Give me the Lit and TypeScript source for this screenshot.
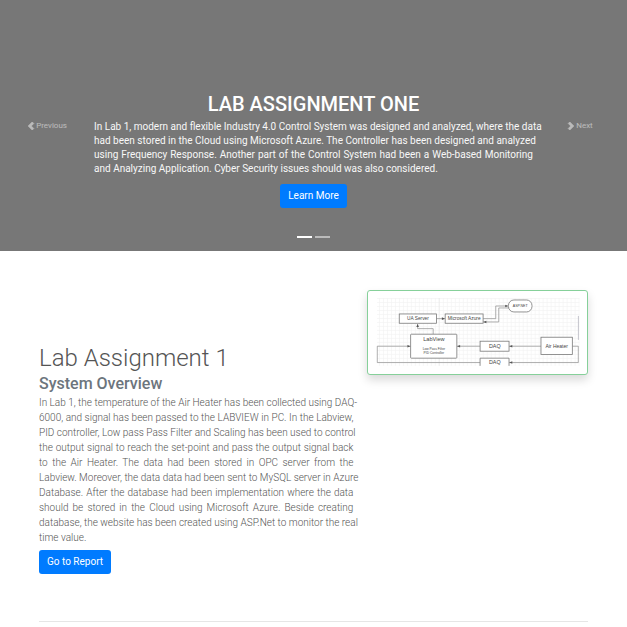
import { LitElement, html, css, svg } from "lit";
import { customElement, property } from "lit/decorators.js";

const introLines = [
  "In Lab 1, modern and flexible Industry 4.0 Control System was designed and analyzed, where the data",
  "had been stored in the Cloud using Microsoft Azure. The Controller has been designed and analyzed",
  "using Frequency Response. Another part of the Control System had been a Web-based Monitoring",
  "and Analyzing Application. Cyber Security issues should was also considered.",
];

const overviewLines = [
  "In Lab 1, the temperature of the Air Heater has been collected using DAQ-",
  "6000, and signal has been passed to the LABVIEW in PC. In the Labview,",
  "PID controller, Low pass Pass Filter and Scaling has been used to control",
  "the output signal to reach the set-point and pass the output signal back",
  "to the Air Heater. The data had been stored in OPC server from the",
  "Labview. Moreover, the data data had been sent to MySQL server in Azure",
  "Database. After the database had been implementation where the data",
  "should be stored in the Cloud using Microsoft Azure. Beside creating",
  "database, the website has been created using ASP.Net to monitor the real",
  "time value.",
];

const lineStyles = css`
  .line { display: block; white-space: nowrap; text-align: justify; text-align-last: justify; }
  .line:last-child { text-align-last: start; }
`;

@customElement("lab-carousel")
class LabCarousel extends LitElement {
  static styles = [lineStyles, css`
    :host { display: block; }
    .hero {
      display: grid;
      grid-template-columns: 15% minmax(0, 1fr) 15%;
      align-items: center;
      background: #777;
      color: #fff;
    }
    .control {
      display: flex;
      align-items: center;
      justify-content: center;
      gap: 1px;
      align-self: stretch;
      padding: 0;
      border: 0;
      background: none;
      color: #fff;
      font: 400 8px/12px Roboto, sans-serif;
      opacity: 0.5;
      cursor: pointer;
    }
    .chevron { width: 8px; height: 10px; fill: currentColor; stroke: currentColor; stroke-width: 0.8; overflow: visible; }
    .caption {
      display: flex;
      flex-direction: column;
      align-items: center;
      padding: 92px 0 13px;
    }
    .title { margin: 0 0 4px; font-size: 20px; line-height: 24px; font-weight: 500; }
    .text { width: 100%; margin: 0 0 8px; font-size: 10px; line-height: 14px; color: #f8f8f8; }
    .button {
      padding: 5px 8px;
      border-radius: 3px;
      background: #007bff;
      color: #fff;
      font-size: 10px;
      line-height: 14px;
      text-decoration: none;
    }
    .indicators { display: flex; gap: 3px; margin-top: 28px; }
    .indicator {
      width: 15px;
      height: 2px;
      padding: 0;
      border: 0;
      background: #fff;
      opacity: 0.5;
    }
    .indicator.active { opacity: 1; }
  `];

  render() {
    return html`
      <section class="hero">
        <button class="control">
          <svg class="chevron" viewBox="0 0 8 8" aria-hidden="true"><path d="M5.25 0l-4 4 4 4 1.5-1.5L4.25 4l2.5-2.5L5.25 0z" /></svg>
          Previous
        </button>
        <div class="caption">
          <h2 class="title">LAB ASSIGNMENT ONE</h2>
          <p class="text">${introLines.map((line) => html`<span class="line">${line}</span>`)}</p>
          <a class="button" href="#lab-1">Learn More</a>
          <div class="indicators">
            <button class="indicator active" aria-label="Slide 1"></button>
            <button class="indicator" aria-label="Slide 2"></button>
          </div>
        </div>
        <button class="control">
          <svg class="chevron" viewBox="0 0 8 8" aria-hidden="true"><path d="M2.75 0l-1.5 1.5L3.75 4l-2.5 2.5L2.75 8l4-4-4-4z" /></svg>
          Next
        </button>
      </section>
    `;
  }
}

@customElement("system-diagram")
class SystemDiagram extends LitElement {
  static styles = css`
    :host { display: block; }
    .frame {
      display: block;
      border: 1px solid #86d09a;
      border-radius: 3px;
      background: #fff;
      box-shadow: 0 5px 10px rgba(0, 0, 0, 0.15);
    }
    .diagram { display: block; width: 100%; font-family: "Liberation Sans", Arial, sans-serif; }
    .wire { fill: none; stroke: #8c8c8c; stroke-width: 0.7; }
    .box { fill: #fff; stroke: #777; stroke-width: 0.8; }
    .label { fill: #444; text-anchor: middle; }
    .head { fill: #555; }
  `;

  render() {
    const heads = [
      "M78 28.7l-3-1.3v2.6z", "M50.7 34l-1.3 3h2.6z", "M43.5 56.3l-3-1.3v2.6z",
      "M90.3 56.3l3-1.3v2.6z", "M142.6 56.3l3-1.3v2.6z", "M142.6 72.7l3-1.3v2.6z",
      "M141.5 16l-3-1.3v2.6z", "M116.6 32l3-1.3v2.6z",
    ];
    const labels: [string, number, number, number][] = [
      ["UA Server", 51, 30.4, 4.8], ["Microsoft Azure", 97.3, 30.4, 4.8], ["ASP.NET", 153.5, 17.2, 3.6],
      ["LabView", 67, 50.8, 5.6], ["Low Pass Filter", 67, 60, 3.3], ["PID Controller", 67, 64, 3.3],
      ["DAQ", 128, 58, 5.4], ["DAQ", 128, 74.4, 5.4], ["Air Heater", 190, 58, 5],
    ];
    return html`
      <div class="frame">
        <svg class="diagram" viewBox="1 1 219 83" role="img" aria-label="System overview diagram">
          <defs>
            <pattern id="grid" width="4" height="4" patternUnits="userSpaceOnUse">
              <path d="M0 .5H4M.5 0V4" stroke="#f3f3f3" stroke-width=".7" />
            </pattern>
          </defs>
          <rect x="10" y="8" width="203" height="68" fill="url(#grid)" />
          <path d="M72.3 8V76" stroke="#e6e6e6" stroke-width=".6" />
          <path d="M211.8 26V50" stroke="#c4c4cc" stroke-width="1" />
          <path class="wire" d="M69.7 28.7H78M66.3 44.3V38.7H50.7V34M43.7 56.3H10.3V72.7H113.3M90 56.3H113.3M142.3 56.3H174.3M205.7 56.3H211.7V72.7H142.3M116.3 28.7H129V16H141M116.3 32H132V18H142" />
          <rect class="box" x="32.3" y="24" width="37.4" height="9.3" />
          <rect class="box" x="78.3" y="24" width="38" height="9.3" />
          <rect class="box" x="141.7" y="10" width="23.6" height="12" rx="5.5" />
          <rect class="box" x="43.7" y="44.3" width="46.3" height="24" rx="0.7" />
          <rect class="box" x="113.3" y="51.3" width="29" height="10" />
          <path class="box" d="M113.3 76V68.3H142.3V76" />
          <rect class="box" x="174.3" y="47.3" width="31.4" height="17.4" />
          ${heads.map((d) => svg`<path class="head" d=${d} />`)}
          ${labels.map(([t, x, y, s]) => svg`<text class="label" x=${x} y=${y} font-size=${s}>${t}</text>`)}
        </svg>
      </div>
    `;
  }
}

@customElement("lab-section")
class LabSection extends LitElement {
  @property() heading = "";
  @property() subheading = "";
  @property({ attribute: false }) lines: string[] = [];

  static styles = [lineStyles, css`
    :host { display: block; padding: 39px 39px 0; }
    .row {
      display: grid;
      grid-template-columns: repeat(12, minmax(0, 1fr));
      column-gap: 14px;
      align-items: start;
    }
    .copy { grid-column: span 7; padding-top: 54px; }
    .figure { grid-column: span 5; }
    .title { margin: 0; color: #555; font-size: 24px; line-height: 29px; font-weight: 300; }
    .subtitle { margin: 1px 0 2px; color: #6c757d; font-size: 16px; line-height: 19px; font-weight: 500; }
    .text {
      margin: 0 0 5px;
      color: #555;
      font-size: 10px;
      line-height: 15px;
      font-weight: 300;
    }
    .button {
      display: inline-block;
      padding: 5px 8px;
      border-radius: 3px;
      background: #007bff;
      color: #fff;
      font-size: 10px;
      line-height: 14px;
      text-decoration: none;
    }
    .divider { margin: 47px 0 0; border: 0; border-top: 1px solid #e6e6e6; }
  `];

  render() {
    return html`
      <div class="row">
        <div class="copy">
          <h1 class="title">${this.heading}</h1>
          <h2 class="subtitle">${this.subheading}</h2>
          <p class="text">${this.lines.map((line) => html`<span class="line">${line}</span>`)}</p>
          <a class="button" href="#report">Go to Report</a>
        </div>
        <system-diagram class="figure"></system-diagram>
      </div>
      <hr class="divider" />
    `;
  }
}

@customElement("app-root")
class AppRoot extends LitElement {
  static styles = css`
    :host { display: block; background: #fff; font-family: Roboto, sans-serif; }
  `;

  render() {
    return html`
      <lab-carousel></lab-carousel>
      <lab-section id="lab-1" heading="Lab Assignment 1" subheading="System Overview" .lines=${overviewLines}></lab-section>
    `;
  }
}
